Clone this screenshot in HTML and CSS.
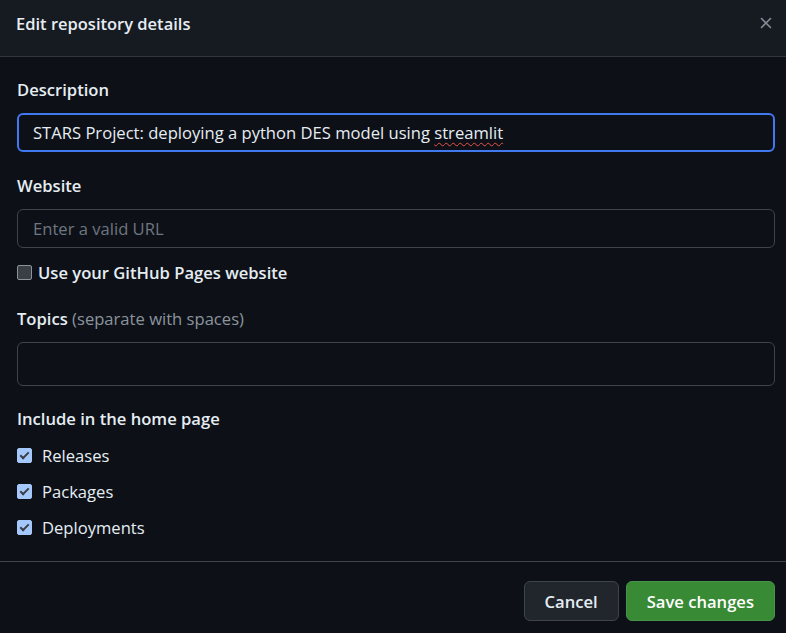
FILE: index.html
```html
<!DOCTYPE html>
<html lang="en">
<head>
    <meta charset="UTF-8">
    <title>Edit repository details</title>
    <link rel="stylesheet" href="styles.css">
</head>
<body>
    <div class="dialog">
        <header class="dialog-header">
            <h1>Edit repository details</h1>
            <button class="close" aria-label="Close">
                <svg width="16" height="16" viewBox="0 0 16 16"><path d="M3.5 3.5l9 9M12.5 3.5l-9 9" stroke="currentColor" stroke-width="1.6" stroke-linecap="round"/></svg>
            </button>
        </header>
        <main class="dialog-body">
            <div class="field">
                <label class="label" for="desc">Description</label>
                <div class="input focused" id="desc"><span>STARS Project: deploying a python DES model using <span class="typo">streamlit</span></span></div>
            </div>
            <div class="field">
                <label class="label" for="site">Website</label>
                <div class="input placeholder" id="site">Enter a valid URL</div>
            </div>
            <label class="check bold-check">
                <span class="box"></span>
                Use your GitHub Pages website
            </label>
            <div class="field topics">
                <label class="label">Topics <span class="hint">(separate with spaces)</span></label>
                <div class="input tall"></div>
            </div>
            <div class="include">
                <div class="label">Include in the home page</div>
                <label class="check"><span class="box checked"></span>Releases</label>
                <label class="check"><span class="box checked"></span>Packages</label>
                <label class="check"><span class="box checked"></span>Deployments</label>
            </div>
        </main>
        <footer class="dialog-footer">
            <button class="btn">Cancel</button>
            <button class="btn primary">Save changes</button>
        </footer>
    </div>
</body>
</html>
```

FILE: styles.css
```css
body {
    margin: 0;
    background-color: #0d1117;
    color: #e6edf3;
    font-family: "Open Sans", "Noto Sans", sans-serif;
    font-size: 16.6px;
}
.dialog {
    width: 786px;
    height: 633px;
    display: flex;
    flex-direction: column;
}
.dialog-header {
    height: 57px;
    background-color: #161b22;
    border-bottom: 1px solid #30363d;
    display: flex;
    align-items: center;
    justify-content: space-between;
    padding: 0 12px 0 16px;
    box-sizing: border-box;
}
.dialog-header h1 {
    margin: 0 0 10px 0;
    font-size: 16.5px;
    font-weight: 600;
}
.close {
    background: none;
    border: none;
    color: #848d97;
    padding: 0;
    width: 16px;
    height: 16px;
    margin-bottom: 10px;
}
.dialog-body {
    padding: 22px 11px 0 17px;
    flex: 1;
}
.field {
    margin-bottom: 23px;
}
.label {
    display: block;
    font-weight: 600;
    margin-bottom: 12px;
    line-height: 22px;
}
.hint {
    font-weight: 400;
    color: #8b949e;
}
.input {
    height: 39px;
    box-sizing: border-box;
    border: 1px solid #3d444d;
    border-radius: 6px;
    padding: 0 15px;
    display: flex;
    align-items: center;
}
.input.focused {
    border: 2px solid #4078f0;
    padding: 0 14px;
}
.input.placeholder {
    color: #6e7681;
}
.input.tall {
    height: 44px;
}
.typo {
    text-decoration: underline wavy #e5534b;
    text-decoration-thickness: 1px;
    text-underline-offset: 3px;
}
.check {
    display: flex;
    align-items: center;
    gap: 10px;
    height: 36px;
}
.bold-check {
    font-weight: 600;
    gap: 6px;
    margin-top: -17px;
}
.topics {
    margin-top: 18px;
    margin-bottom: 22px;
}
.include .label {
    margin-bottom: 7px;
}
.box {
    width: 13px;
    height: 13px;
    border: 1px solid #8b949e;
    border-radius: 2px;
    background-color: #3a3f46;
    flex-shrink: 0;
}
.box.checked {
    background-color: #a5c8fc;
    border-color: #a5c8fc;
    position: relative;
}
.box.checked::after {
    content: "";
    position: absolute;
    left: 4px;
    top: 1px;
    width: 3px;
    height: 7px;
    border: solid #3b3f45;
    border-width: 0 2px 2px 0;
    transform: rotate(45deg);
}
.dialog-footer {
    border-top: 1px solid #3d444d;
    height: 72px;
    box-sizing: border-box;
    display: flex;
    justify-content: flex-end;
    align-items: flex-start;
    gap: 7px;
    padding: 19px 11px 0 0;
}
.btn {
    font-family: inherit;
    font-size: 16.6px;
    font-weight: 600;
    color: #e6edf3;
    background-color: #21262d;
    border: 1px solid #3d444d;
    border-radius: 6px;
    height: 40px;
    padding: 0 20px;
}
.btn.primary {
    background-color: #388a34;
    border-color: #46954a;
    color: #fff;
}
```
